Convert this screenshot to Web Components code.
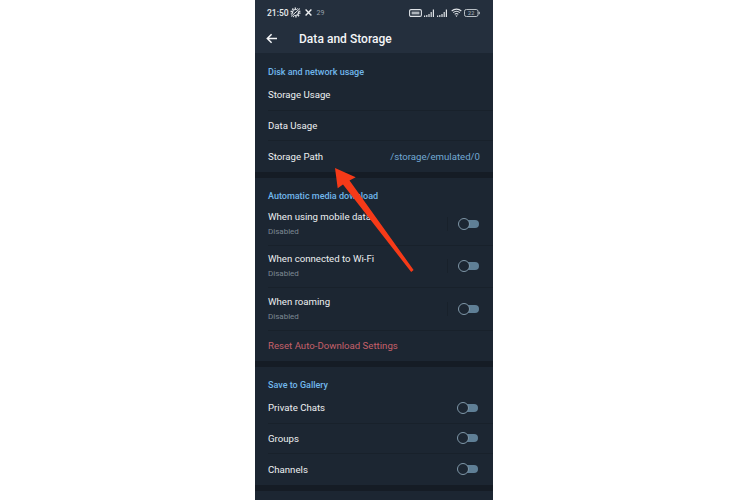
<!DOCTYPE html>
<html><head><meta charset="utf-8"><style>
html,body{margin:0;padding:0;background:#fff;height:500px;overflow:hidden}
body{font-family:Roboto,"Liberation Sans",sans-serif}
</style></head><body>
<template id="t-phone"><style>
:host{display:flex;flex-direction:column;width:238px;height:500px;margin-left:255px;background:#1c2632;position:relative;overflow:hidden}
</style><slot></slot></template>

<template id="t-status"><style>
:host{display:flex;align-items:center;height:24px;padding:1px 13px 0 12px;color:#e8ebee;font-size:8.5px;font-weight:500;box-sizing:border-box}
.l{display:flex;align-items:center}
.r{margin-left:auto;display:flex;align-items:center}
.n{font-size:7px;color:#98a1ab;font-weight:400;margin-left:5px}
svg{display:block}
</style>
<div class="l"><span>21:50</span>
<svg style="margin-left:1.5px" width="11" height="11" viewBox="0 0 11 11"><circle cx="5.5" cy="5.5" r="3" fill="none" stroke="#dfe3e7" stroke-width="1.2"/><circle cx="5.5" cy="5.5" r="4.3" fill="none" stroke="#dfe3e7" stroke-width="1.5" stroke-dasharray="1.4 1.3"/><path d="M1 9.5l9-8" stroke="#242f3d" stroke-width="2.2"/><path d="M1 9.5l9-8" stroke="#e6e9ec" stroke-width="1"/></svg>
<svg style="margin-left:3.5px" width="7" height="7" viewBox="0 0 7 7"><path d="M.6.6l5.8 5.8M6.4.6L.6 6.4" stroke="#eef0f2" stroke-width="1.4"/></svg>
<span class="n">29</span></div>
<div class="r">
<svg width="13" height="8" viewBox="0 0 13 8"><rect x=".6" y=".6" width="11.8" height="6.8" rx="1.4" fill="none" stroke="#dfe3e7" stroke-width="1.1"/><rect x="2.6" y="2.6" width="7.8" height="2.8" fill="#aeb5bc"/></svg>
<svg style="margin-left:2px" width="11" height="8" viewBox="0 0 11 8"><path d="M0 6.5h1.2V8H0zM2.2 6h1.2v2H2.2zM4.4 5h1.2v3H4.4zM6.6 3h1.2v5H6.6zM8.8 .5H10V8H8.8z" fill="#dfe3e7"/></svg>
<svg style="margin-left:2px" width="11" height="8" viewBox="0 0 11 8"><path d="M0 6.5h1.2V8H0zM2.2 6h1.2v2H2.2zM4.4 5h1.2v3H4.4zM6.6 3h1.2v5H6.6zM8.8 .5H10V8H8.8z" fill="#dfe3e7"/></svg>
<svg style="margin-left:3px" width="11" height="9" viewBox="0 0 11 9"><path d="M.7 3a7 7 0 0 1 9.6 0M2.2 4.7a5 5 0 0 1 6.6 0M3.7 6.3a2.8 2.8 0 0 1 3.6 0" fill="none" stroke="#dfe3e7" stroke-width="1.1"/><path d="M5.5 9L4.4 7.6h2.2z" fill="#dfe3e7"/></svg>
<svg style="margin-left:2px" width="16" height="8" viewBox="0 0 16 8"><rect x=".5" y=".5" width="13.5" height="7" rx="1.8" fill="none" stroke="#b9c0c6"/><rect x="14.6" y="2.8" width="1.2" height="2.4" fill="#b9c0c6"/><text x="7.2" y="6" font-size="5.5" text-anchor="middle" fill="#9aa3ad" font-family="Roboto">22</text></svg>
</div></template>

<template id="t-appbar"><style>
:host{display:flex;align-items:center;height:29px;box-sizing:border-box}
svg{margin-left:11px;display:block}
span{margin-left:21px;color:#f4f6f8;font-size:12px;font-weight:500;letter-spacing:.03px}
</style><svg width="12" height="11" viewBox="0 0 12 11"><path d="M11 5.5H1.8M5.6 1.2L1.3 5.5l4.3 4.3" fill="none" stroke="#f4f6f8" stroke-width="1.5"/></svg><span><slot></slot></span></template>

<template id="t-header"><style>
:host{display:block;background:#242f3d;flex:none}
</style><slot></slot></template>

<template id="t-section"><style>
:host{display:block;flex:none}
.h{height:var(--hh,26px);display:flex;align-items:flex-end;padding:0 0 var(--hp,3px) 13px;box-sizing:border-box;color:#71b7ec;font-size:9px;font-weight:500}
</style><div class="h"><slot name="title"></slot></div><slot></slot></template>

<template id="t-gap"><style>
:host{display:block;flex:none;height:6.5px;background:#151c25}
</style></template>

<template id="t-row"><style>
:host{display:flex;align-items:center;height:30.5px;margin-left:13px;box-sizing:border-box;font-size:9.65px;color:#eceff1;border-bottom:1px solid #18212b}
:host([last]){border-bottom:none}
.v{margin-left:auto;margin-right:13px;color:#72a9d4}
</style><span><slot></slot></span><span class="v"><slot name="value"></slot></span><slot name="end"></slot></template>

<template id="t-toggle-row"><style>
:host{display:flex;align-items:center;height:42.5px;margin-left:13px;box-sizing:border-box;border-bottom:1px solid #18212b}
:host([last]){border-bottom:none}
.t{display:flex;flex-direction:column;gap:4px;font-size:9.65px;color:#eceff1;line-height:11px}
.s{font-size:8px;color:#7d8892;line-height:11px}
.d{margin-left:auto;width:1px;height:14px;background:#18212b;margin-right:10px}
</style><div class="t"><span><slot></slot></span><span class="s"><slot name="sub"></slot></span></div><div class="d"></div><slot name="end"></slot></template>

<template id="t-toggle"><style>
:host{display:block;flex:none;width:21px;height:12px;position:relative;margin-right:var(--tr,14px)}
.b{position:absolute;left:3px;right:0;top:2px;height:8px;background:#5f7f96;border-radius:4px}
.k{position:absolute;left:0;top:0;width:10px;height:10px;border:1px solid #7f97a8;border-radius:50%;background:#1c2632}
</style><div class="b"></div><div class="k"></div></template>

<template id="t-arrow"><style>
:host{display:block;position:absolute;left:0;top:0;width:238px;height:500px;pointer-events:none}
</style><svg width="238" height="500" viewBox="255 0 238 500"><path d="M335 168L355.7 177.3L349.5 180.5L413.6 270L411.2 272L343 184.5L337.7 188.3Z" fill="#f63a18"/></svg></template>

<phone-frame>
  <screen-header>
    <status-bar></status-bar>
    <app-bar>Data and Storage</app-bar>
  </screen-header>
  <settings-section style="--hh:27px">
    <span slot="title">Disk and network usage</span>
    <settings-row>Storage Usage</settings-row>
    <settings-row>Data Usage</settings-row>
    <settings-row last>Storage Path<span slot="value">/storage/emulated/0</span></settings-row>
  </settings-section>
  <section-gap></section-gap>
  <settings-section style="--hh:25px;--hp:2.5px">
    <span slot="title">Automatic media download</span>
    <toggle-row>When using mobile data<span slot="sub">Disabled</span><toggle-switch slot="end"></toggle-switch></toggle-row>
    <toggle-row>When connected to Wi-Fi<span slot="sub">Disabled</span><toggle-switch slot="end"></toggle-switch></toggle-row>
    <toggle-row>When roaming<span slot="sub">Disabled</span><toggle-switch slot="end"></toggle-switch></toggle-row>
    <settings-row last style="color:#c4606a;height:30px">Reset Auto-Download Settings</settings-row>
  </settings-section>
  <section-gap></section-gap>
  <settings-section style="--tr:15px">
    <span slot="title">Save to Gallery</span>
    <settings-row>Private Chats<toggle-switch slot="end"></toggle-switch></settings-row>
    <settings-row>Groups<toggle-switch slot="end"></toggle-switch></settings-row>
    <settings-row last>Channels<toggle-switch slot="end"></toggle-switch></settings-row>
  </settings-section>
  <section-gap></section-gap>
  <red-arrow></red-arrow>
</phone-frame>
<script>
const map={'phone-frame':'t-phone','status-bar':'t-status','app-bar':'t-appbar','screen-header':'t-header','settings-section':'t-section','section-gap':'t-gap','settings-row':'t-row','toggle-row':'t-toggle-row','toggle-switch':'t-toggle','red-arrow':'t-arrow'};
for(const [n,id] of Object.entries(map)){
  customElements.define(n,class extends HTMLElement{constructor(){super();this.attachShadow({mode:'open'}).appendChild(document.getElementById(id).content.cloneNode(true));}});
}
</script>
</body></html>
